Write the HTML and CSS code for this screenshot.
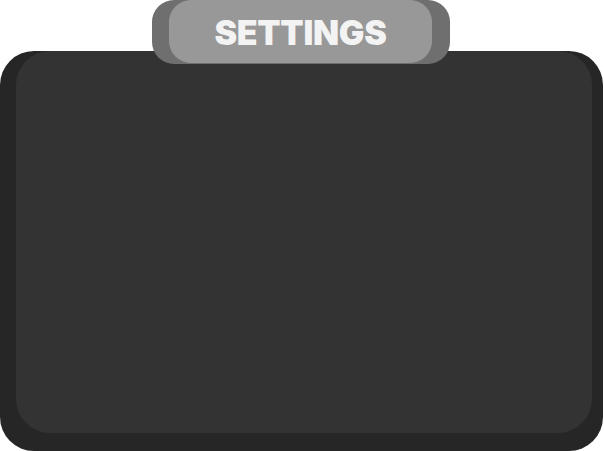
FILE: index.html
```html
<!DOCTYPE html>
<html>
<head>
<meta charset="utf-8">
<link rel="stylesheet" href="styles.css">
</head>
<body>
<div class="screen">
  <div class="tab">
    <div class="tab-face">SETTINGS</div>
  </div>
  <div class="panel">
    <div class="panel-face"></div>
  </div>
</div>
</body>
</html>
```
FILE: styles.css
```css
html, body {
  margin: 0;
  padding: 0;
  background: #ffffff;
}
.screen {
  width: 604px;
  height: 451px;
  display: flex;
  flex-direction: column;
  align-items: center;
  overflow: hidden;
}
.tab {
  position: relative;
  z-index: 2;
  width: 298px;
  height: 64px;
  box-sizing: border-box;
  margin-left: -2px;
  margin-bottom: -13px;
  padding: 0 18px 1px 17px;
  background: #6f6f6f;
  border-radius: 22px;
  display: flex;
  flex-shrink: 0;
}
.tab-face {
  flex: 1;
  background: #989898;
  border-radius: 22px;
  display: flex;
  align-items: center;
  justify-content: center;
  color: #f3f3f3;
  font-family: Inter, "Open Sans", sans-serif;
  font-weight: 900;
  font-size: 34px;
  letter-spacing: -0.3px;
  padding-top: 2px;
}
.panel {
  align-self: flex-start;
  width: 603px;
  height: 400px;
  box-sizing: border-box;
  padding: 0 11px 18px 16px;
  background: #262626;
  border-radius: 34px;
  display: flex;
  flex-shrink: 0;
}
.panel-face {
  flex: 1;
  background: #333333;
  border-radius: 34px;
}
```
